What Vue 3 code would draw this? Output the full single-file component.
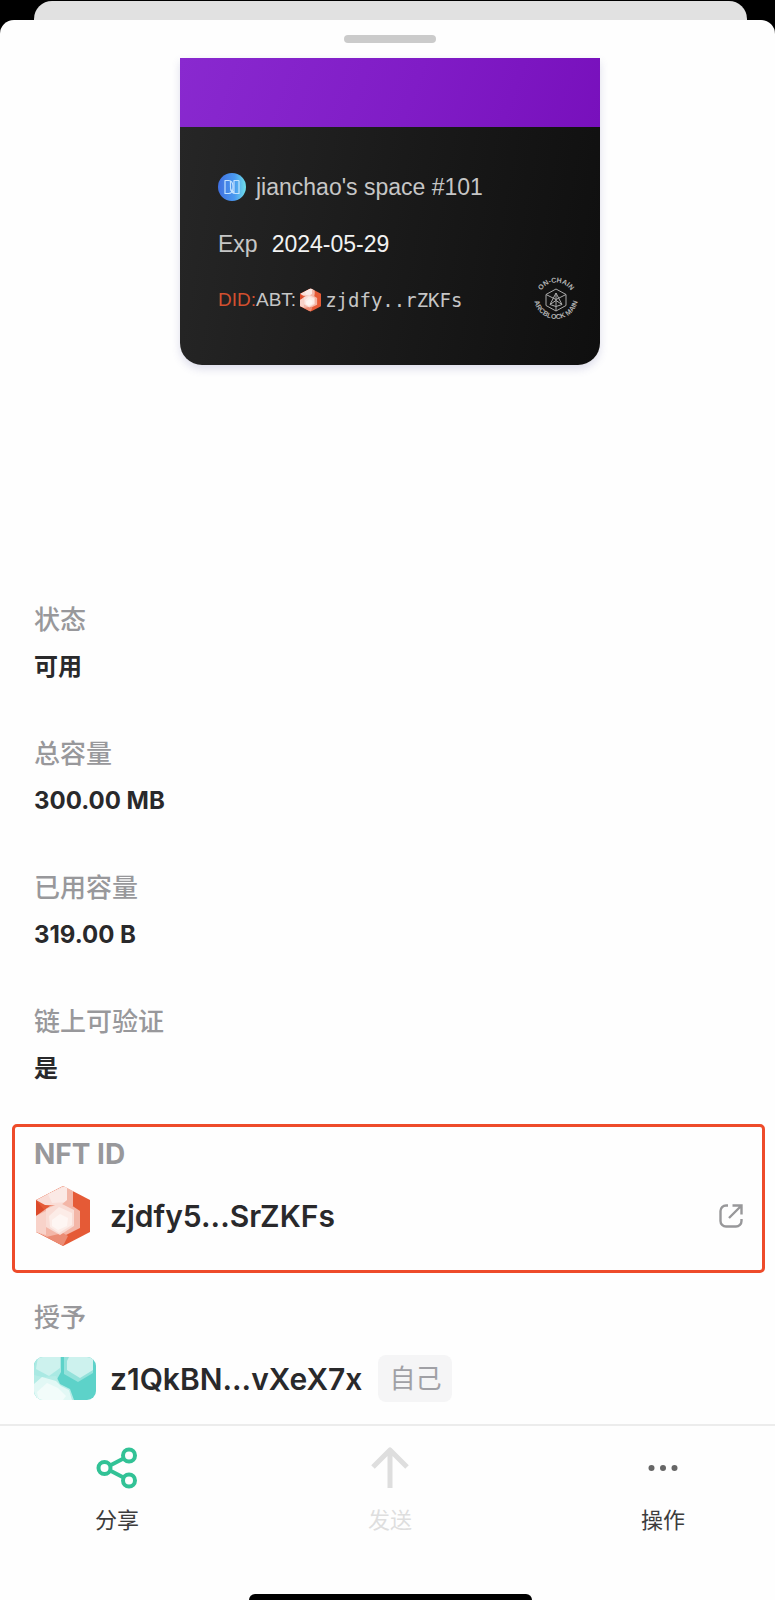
<template>
  <div class="screen">
    <div class="back-sheet"></div>
    <main class="sheet">
      <header class="preview">
        <div class="handle"></div>
        <section class="card">
          <div class="card-top"></div>
          <div class="card-body">
            <div class="space-row">
              <svg class="space-logo" viewBox="0 0 28 28">
                <defs>
                  <linearGradient id="logoFill" x1="0" y1="0" x2="1" y2="0">
                    <stop offset="0" stop-color="#3f6fe0" />
                    <stop offset="0.6" stop-color="#4a9af0" />
                    <stop offset="1" stop-color="#6fe0e8" />
                  </linearGradient>
                </defs>
                <circle cx="14" cy="14" r="14" fill="url(#logoFill)" />
                <g fill="none" stroke="#c3e2ff" stroke-width="1.2" stroke-linejoin="round">
                  <path d="M7 7.5h3.5c3 0 4.5 2.5 4.5 6.5s-1.5 6.5-4.5 6.5H7z" />
                  <path d="M21 7.5h-5v12l-3.500-3" />
                  <path d="M21 7.5v13h-3.5c-3 0-5-2.500-5-6.500V8" />
                </g>
              </svg>
              <span>jianchao's space #101</span>
            </div>
            <div class="exp-row">
              <span>Exp</span>
              <time datetime="2024-05-29">2024-05-29</time>
            </div>
            <div class="did-row">
              <span><span class="did">DID:</span>ABT:</span>
              <svg class="did-gem" viewBox="0 0 54 60">
                <use href="#gem" />
              </svg>
              <span class="mono">zjdfy..rZKFs</span>
              <svg class="stamp" viewBox="0 0 48 48">
                <defs>
                  <path id="arcTop" d="M6.5 24a17.5 17.5 0 0 1 35 0" />
                  <path id="arcBottom" d="M2 21a22 22 0 1 0 44 0" />
                </defs>
                <text><textPath href="#arcTop" startOffset="50%" text-anchor="middle">ON-CHAIN</textPath></text>
                <text><textPath href="#arcBottom" startOffset="50%" text-anchor="middle">ARCBLOCK MAIN</textPath></text>
                <g fill="none" stroke="#a9a9a9" stroke-linejoin="round">
                  <path d="M24 13l10 5.500v11L24 35l-10-5.500v-11z" />
                  <path d="M14 18.500l10 5 10-5M24 17v18M24 17l-6 11.500M24 17l6 11.500M18 28.500l6-4 6 4M18 28.500l6 2 6-2" />
                </g>
              </svg>
            </div>
          </div>
        </section>
      </header>

      <dl class="fields">
        <div v-for="field in fields" :key="field.label" class="field">
          <dt>{{ field.label }}</dt>
          <dd>{{ field.value }}</dd>
        </div>
      </dl>

      <section class="nft">
        <h2>NFT ID</h2>
        <div class="address">
          <svg class="gem" viewBox="0 0 54 60">
            <defs>
              <clipPath id="hex">
                <path d="M27 0l27 14v32L27 60 0 46V14z" />
              </clipPath>
              <g id="gem" clip-path="url(#hex)">
                <path fill="#e55a36" d="M0 0h54v60H0z" />
                <path fill="#f9ddd7" d="M27 0L0 14l9 5 17 1 11-4V3z" />
                <path fill="#fbe9e5" d="M30 0L12 8l4 9 15-1V0z" />
                <path fill="#f3b6a7" d="M31 2l6 3v15H24l7-6z" />
                <path fill="#dc4a2a" d="M0 14l10 12-10 5z" />
                <path fill="#f3b6a7" d="M0 30l14-10 18-3 12 8v17L28 50 13 52 0 46z" />
                <path fill="#f8d2c9" d="M0 30l10-5v24L0 46z" />
                <path fill="#eb8c74" d="M10 51l17-4 5 3-5 10z" />
                <path fill="#f9dcd5" d="M10 23l14-6 14 7v16l-14 9-14-8z" />
                <path fill="#fcece7" d="M13 30l10-9 13 6v12l-13 8-9-6z" />
                <path fill="#fef6f3" d="M16 34l8-6 8 4-1 8-9 4-6-4z" />
              </g>
            </defs>
            <use href="#gem" />
          </svg>
          <strong>zjdfy5...SrZKFs</strong>
          <a href="#nft" class="open" aria-label="NFT ID">
            <svg viewBox="0 0 24 24" fill="none" stroke="#98989a" stroke-width="2.400">
              <path d="M9 1.500H7A5.500 5.500 0 0 0 1.500 7v10A5.500 5.500 0 0 0 7 22.500h10a5.500 5.500 0 0 0 5.500-5.500v-2" />
              <path d="M13.500 1.500h9v9M22 2L10 14" />
            </svg>
          </a>
        </div>
      </section>

      <section class="owner">
        <h2>授予</h2>
        <div class="address">
          <svg class="avatar" viewBox="0 0 62 43">
            <path fill="#5dd2c9" d="M0 0h62v43H0z" />
            <path fill="#a9e9e3" d="M0 0h27v15l-5 9H0z" />
            <path fill="#cdf2ee" d="M4 0h22v11l-11 8L2 12z" />
            <path fill="#94e2db" d="M30 0h29v16L44 25l-14-8z" />
            <path fill="#cdf2ee" d="M35 0h24v13l-13 8-13-8V4z" />
            <path fill="#b5ece6" d="M0 18l8 2 14-1 4 8 10 5 4 11H0z" />
            <path fill="#e2f8f5" d="M0 27l8-7 14 4 5 5 8 4 3 10H0z" />
            <path fill="#f2fcfa" d="M3 35l10-9 11 5 8 8-3 4H5z" />
          </svg>
          <strong>z1QkBN...vXeX7x</strong>
          <span class="tag">自己</span>
        </div>
      </section>

      <nav class="toolbar">
        <button type="button">
          <svg viewBox="0 0 42 42" fill="none" stroke="#32c296" stroke-width="4">
            <circle cx="8.5" cy="21" r="6" />
            <circle cx="33" cy="8.5" r="6" />
            <circle cx="33" cy="33.5" r="6" />
            <path d="M14 18.500l13.500-7M14 23.500l13.500 7" />
          </svg>
          <span>分享</span>
        </button>
        <button type="button" disabled>
          <svg viewBox="0 0 42 42" fill="none" stroke="#dedede" stroke-width="5" stroke-linejoin="round">
            <path d="M21 41V3M4 20L21 3l17 17" />
          </svg>
          <span>发送</span>
        </button>
        <button type="button">
          <svg viewBox="0 0 42 42" fill="#666">
            <circle cx="9.5" cy="21" r="3" />
            <circle cx="21" cy="21" r="3" />
            <circle cx="32.5" cy="21" r="3" />
          </svg>
          <span>操作</span>
        </button>
      </nav>
      <footer class="bottom">
        <div class="home-bar"></div>
      </footer>
    </main>
  </div>
</template>

<script setup>
import { ref } from 'vue'

const fields = ref([
  { label: '状态', value: '可用' },
  { label: '总容量', value: '300.00 MB' },
  { label: '已用容量', value: '319.00 B' },
  { label: '链上可验证', value: '是' }
])
</script>

<style>
body {
  margin: 0;
  background: #000;
}
</style>

<style scoped>
.screen {
  display: flex;
  flex-direction: column;
  min-height: 100vh;
  font-family: Inter, 'Noto Sans CJK SC', sans-serif;
  color: #29292b;
}

.back-sheet {
  height: 19px;
  margin: 1px 28px 0 34px;
  background: #e1e1e1;
  border-radius: 18px 18px 0 0;
}

.sheet {
  flex: 1;
  display: flex;
  flex-direction: column;
  background: #fefefe;
  border-radius: 14px 14px 0 0;
}

.preview {
  padding: 15px 0 0 5px;
}

.handle {
  width: 92px;
  height: 8px;
  margin: 0 auto 15px;
  border-radius: 4px;
  background: #cbcbcb;
}

.card {
  width: 420px;
  max-width: 100%;
  margin: 0 auto;
  overflow: hidden;
  border-radius: 0 0 22px 22px;
  box-shadow: 0 4px 8px rgba(90, 90, 160, 0.2);
}

.card-top {
  height: 69px;
  background: linear-gradient(110deg, #8929cf, #801cc6 55%, #7810bc);
}

.card-body {
  height: 238px;
  box-sizing: border-box;
  padding: 43px 20px 0 38px;
  background: linear-gradient(100deg, #262626, #1a1a1a 50%, #0f0f0f);
  font-family: 'Liberation Sans', Arial, sans-serif;
  font-size: 23px;
  color: #c6c6c6;
}

.space-row,
.exp-row,
.did-row {
  display: flex;
  align-items: center;
  height: 34px;
}

.space-row {
  gap: 10px;
}

.space-logo {
  width: 28px;
  height: 28px;
}

.exp-row {
  gap: 14px;
  margin-top: 23px;
}

.exp-row time {
  color: #f2f2f2;
}

.did-row {
  height: 48px;
  margin-top: 15px;
  gap: 4px;
  font-size: 19px;
}

.did {
  color: #d2502f;
}

.did-gem {
  width: 21px;
  height: 24px;
}

.mono {
  font-family: 'DejaVu Sans Mono', monospace;
}

.stamp {
  width: 48px;
  height: 48px;
  margin-left: auto;
}

.stamp text {
  font-size: 7px;
  font-weight: bold;
  fill: #b4b4b4;
}

.fields {
  margin: 235px 34px 0;
}

.field {
  margin-bottom: 47px;
}

.field dt,
h2 {
  margin: 0;
  font-size: 26px;
  line-height: 40px;
  font-weight: 500;
  color: #98989b;
}

.field dd {
  margin: 7px 0 0;
  font-size: 24px;
  line-height: 40px;
  font-weight: 700;
}

.nft {
  margin: -12px 10px 0 12px;
  padding: 7px 19px 24px;
  border: 3px solid #ee4b2a;
  border-radius: 5px;
}

.nft h2 {
  font-size: 28px;
  font-weight: 700;
}

.address {
  display: flex;
  align-items: center;
}

.address strong {
  font-size: 30px;
  line-height: 40px;
  font-weight: 600;
}

.nft .address {
  margin-top: 12px;
}

.gem {
  width: 54px;
  height: 60px;
  margin: 0 20px 0 2px;
}

.open {
  display: flex;
  margin-left: auto;
}

.open svg {
  width: 24px;
  height: 24px;
}

.owner {
  margin: 25px 34px 0;
}

.owner .address {
  margin-top: 17px;
}

.avatar {
  width: 62px;
  height: 43px;
  margin-right: 14px;
  border-radius: 9px;
}

.tag {
  margin-left: 16px;
  padding: 0 11px;
  border-radius: 8px;
  background: #f5f5f6;
  font-size: 26px;
  line-height: 47px;
  font-weight: 400;
  color: #a0a0a5;
}

.toolbar {
  display: flex;
  justify-content: space-between;
  margin-top: 22px;
  padding: 21px 72px 0 77px;
  border-top: 2px solid #ececec;
}

.toolbar button {
  display: flex;
  flex-direction: column;
  align-items: center;
  gap: 13px;
  width: 80px;
  padding: 0;
  border: 0;
  background: none;
  font: inherit;
  font-size: 22px;
  line-height: 36px;
  color: #3c3c3c;
  cursor: pointer;
}

.toolbar button:disabled {
  color: #dedede;
  cursor: default;
}

.toolbar svg {
  width: 42px;
  height: 42px;
}

.bottom {
  margin-top: auto;
  padding-left: 5px;
}

.home-bar {
  width: 283px;
  height: 6px;
  margin: 0 auto;
  border-radius: 6px 6px 0 0;
  background: #000;
}
</style>
